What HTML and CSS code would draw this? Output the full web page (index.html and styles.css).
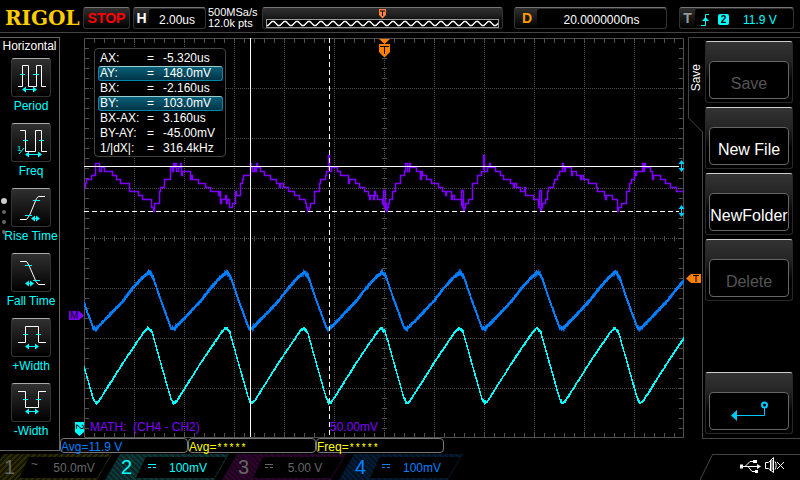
FILE: index.html
```html
<!DOCTYPE html>
<html lang="en">
<head>
<meta charset="utf-8">
<title>Oscilloscope</title>
<link rel="stylesheet" href="styles.css">
</head>
<body>
<header class="topbar">
  <div class="logo">RIGOL</div>
  <button class="chip run">STOP</button>
  <div class="chip timebase"><b class="tag">H</b><span class="well">2.00us</span></div>
  <div class="sampling">500MSa/s<br>12.0k pts</div>
  <div class="chip memory">
    <svg class="memory-mark" viewBox="0 0 8 10" width="8" height="10"><path d="M0 0H7V6L3.500 9.500L0 6Z" fill="#ff8040"/><path d="M1 2H6M3.500 2V7" stroke="#000" fill="none"/></svg>
    <svg class="memory-wave" width="100%" height="9">
      <defs><pattern id="sine" width="12" height="7" patternUnits="userSpaceOnUse"><path d="M0 5.500H1L5 1.500H7L11 5.500H12" fill="none" stroke="#fff" stroke-width="1.300"/></pattern></defs>
      <rect width="100%" height="7" fill="url(#sine)"/>
    </svg>
  </div>
  <div class="chip delay"><b class="tag orange">D</b><span class="well">20.0000000ns</span></div>
  <div class="chip trigger"><b class="tag grey">T</b>
    <span class="well"><svg viewBox="0 0 9 12" width="9" height="12"><path d="M0 11.500H4.500V.5H8" fill="none" stroke="#0ff"/><path d="M4.500 3L8 7H1Z" fill="#0ff"/></svg>
    <b class="source">2</b><span class="level">11.9 V</span></span></div>
</header>

<main class="main">
  <nav class="measure-menu">
    <h1 class="menu-title">Horizontal</h1>
    <div class="pager"><i class="dot on"></i><i class="dot"></i><i class="dot"></i><i class="dot"></i></div>
    <button class="measure"><svg class="icon" viewBox="1 1 38 37"><path class="w" d="M7 28.500H11.500V7.500H17.500V28.500H25.500V7.500H30.500V28.500H35"/><path class="c" d="M9 16.500H14M22 16.500H28M12 31.500H25"/><path class="a" d="M11 31.500L15 28.500V34.500ZM26 31.500L22 28.500V34.500Z"/></svg>Period</button>
    <button class="measure"><svg class="icon" viewBox="1 1 38 37"><path class="w" d="M9 7.500H14.500V28.500H24.500V7.500H30.500V28.500H36"/><path class="c" d="M12 17.500H17M28 17.500H33M15 31.500H30M8 31L13 25"/><path class="a" d="M14 31.500L18 28.500V34.500ZM31 31.500L27 28.500V34.500Z"/><text class="tiny" x="6" y="28">1</text></svg>Freq</button>
    <button class="measure"><svg class="icon" viewBox="1 1 38 37"><path class="w" d="M9 31.500H15.500L18.500 27.500L25.500 10.500L27.500 8.500H34"/><path class="c" d="M22 12.500H29M14 27.500H21M21 30.500H28"/><path class="a" d="M20 30.500L24 27.500V33.500ZM29 30.500L25 27.500V33.500Z"/></svg>Rise Time</button>
    <button class="measure"><svg class="icon" viewBox="1 1 38 37"><path class="w" d="M9 8.500H15.500L18 12.500L25 28.500L27.500 31.500H34"/><path class="c" d="M14 12.500H21M22 27.500H29M15 30.500H22"/><path class="a" d="M14 30.500L18 27.500V33.500ZM23 30.500L19 27.500V33.500Z"/></svg>Fall Time</button>
    <button class="measure"><svg class="icon" viewBox="1 1 38 37"><path class="w" d="M7 24.500H14.500V8.500H27.500V24.500H35"/><path class="c" d="M12 16.500H17M25 16.500H30M15 28.500H27"/><path class="a" d="M14 28.500L18 25.500V31.500ZM28 28.500L24 25.500V31.500Z"/></svg>+Width</button>
    <button class="measure"><svg class="icon" viewBox="1 1 38 37"><path class="w" d="M7 8.500H14.500V24.500H27.500V8.500H35"/><path class="c" d="M12 16.500H17M25 16.500H30M15 28.500H27"/><path class="a" d="M14 28.500L18 25.500V31.500ZM28 28.500L24 25.500V31.500Z"/></svg>-Width</button>
  </nav>

  <section class="center">
    <div class="scope">
      <svg class="plot" id="plot" viewBox="84 38 600 400">
        <g id="grid" class="grid"></g>
        <path id="math" class="trace" stroke="#8000ff"/>
        <path id="ch4-soft" class="trace" stroke="#0050b0"/>
        <path id="ch4" class="trace" stroke="#0080ff"/>
        <path id="ch2" class="trace" stroke="#00ffff"/>
        <text class="math-text" x="90" y="431">MATH:&#160; (CH4 - CH2)</text>
        <text class="math-text" x="330" y="431">50.00mV</text>
        <g class="cursor">
          <path d="M250.500 38V437M84 166.500H679"/>
          <path d="M329.500 38V437" stroke-dasharray="5 3"/>
          <path d="M84 211.500H679" stroke-dasharray="5 3"/>
        </g>
        <g fill="#00d0ff">
          <path id="handle" d="M681.500 160L684.500 164H682V168H684.500L681.500 172L678.500 168H681V164H678.500Z"/>
          <use href="#handle" y="45"/>
        </g>
        <path d="M379 39H390L384.500 44ZM379 44H390V52L384.500 57.500L379 52Z" fill="#ff8000"/>
        <path d="M380 46.500H389M384.500 46V54" stroke="#000" fill="none" stroke-width="1"/>
        <path d="M69 311H79L84 315.500L79 320H69Z" fill="#8000ff"/>
        <text class="mark" x="70" y="319">M</text>
        <path d="M75 422H84V432L79.500 436L75 432Z" fill="#0ff"/>
        <text class="mark" transform="translate(76 424) rotate(90)">2</text>
        <path d="M686 278.500L691 274H701V283H691Z" fill="#ff8000"/>
        <path d="M693 275.500H699M696 276V282" stroke="#000" fill="none"/>
      </svg>
      <table class="readout">
        <tr><th>AX:</th><td>=</td><td>-5.320us</td></tr>
        <tr class="picked"><th>AY:</th><td>=</td><td>148.0mV</td></tr>
        <tr><th>BX:</th><td>=</td><td>-2.160us</td></tr>
        <tr class="picked"><th>BY:</th><td>=</td><td>103.0mV</td></tr>
        <tr><th>BX-AX:</th><td>=</td><td>3.160us</td></tr>
        <tr><th>BY-AY:</th><td>=</td><td>-45.00mV</td></tr>
        <tr><th>1/|dX|:</th><td>=</td><td>316.4kHz</td></tr>
      </table>
    </div>
    <div class="results">
      <div class="result blue">Avg=11.9 V</div>
      <div class="result">Avg=<span class="stars">*****</span></div>
      <div class="result">Freq=<span class="stars">*****</span></div>
    </div>
  </section>

  <aside class="side">
    <div class="side-tab">
      <svg class="tab-line" viewBox="0 0 15 95" width="15" height="95"><path d="M15 .5H.5V81L14.500 95" fill="none" stroke="#444"/></svg>
      <span class="tab-text">Save</span>
      <div class="tab-rule"></div>
    </div>
    <div class="keys">
      <button class="key" disabled><span class="face">Save</span></button>
      <button class="key"><span class="face">New File</span></button>
      <button class="key"><span class="face">NewFolder</span></button>
      <button class="key" disabled><span class="face">Delete</span></button>
      <button class="key back" aria-label="Back"><span class="face"><svg viewBox="0 0 40 20" width="40" height="20"><path d="M5 14.500H35.500V7" fill="none" stroke="#00c8ff"/><path d="M2 14.500L8 9V20Z" fill="#00c8ff"/><circle cx="35.500" cy="4" r="2.500" fill="none" stroke="#00c8ff" stroke-width="2"/></svg></span></button>
    </div>
  </aside>
</main>

<footer class="channels">
  <div class="channel ch1"><b class="num">1</b><div class="vals"><span class="ac">~</span><span class="scale">50.0mV</span></div></div>
  <div class="channel ch2"><b class="num">2</b><div class="vals"><span class="dc"></span><span class="scale">100mV</span></div></div>
  <div class="channel ch3"><b class="num">3</b><div class="vals"><span class="dc"></span><span class="scale">5.00 V</span></div></div>
  <div class="channel ch4"><b class="num">4</b><div class="vals"><span class="dc"></span><span class="scale">100mV</span></div></div>
  <svg class="status" viewBox="0 0 100 26" width="100" height="26">
    <path d="M0 26L12.500 .5H100" fill="none" stroke="#444"/>
    <g fill="none" stroke="#fff"><path d="M41 12.500H58M45 12.500L50 7.500H54M48 12.500L52 17.500H56"/></g>
    <path d="M40 10.500H43V14.500H40ZM57 10L61 12.500L57 15ZM53 6H57V9H53ZM55 16H58V19H55Z" fill="#fff"/>
    <path d="M65.500 8.500H68.500L73.500 3.500V18.500L68.500 14.500H65.500ZM70.500 6V17M72 6V16M75 7.500C76.500 10 76.500 13 75 15.500M77 8L84 15M84 8L77 15" fill="none" stroke="#fff"/>
  </svg>
</footer>
<script src="traces.js"></script>
</body>
</html>
```
FILE: traces.js
```js
// Graticule and sampled traces, in plot coordinates.
const L = 84, R = 684, T = 38, B = 438, PERIOD = 77.75, START = 96;

let seed = 11;
function rnd() {
  seed = (seed * 1103515245 + 12345) % 2147483648;
  return seed / 2147483648;
}

function line(d, dash, width) {
  const p = document.createElementNS('http://www.w3.org/2000/svg', 'path');
  p.setAttribute('d', d);
  if (dash) p.setAttribute('stroke-dasharray', dash);
  if (width) p.setAttribute('stroke-width', width);
  document.getElementById('grid').appendChild(p);
}
for (let x = L + 50; x < R; x += 50) line(`M${x + .5} ${T}V${B}`, '1 1');
for (let y = T + 50; y < B; y += 50) line(`M${L} ${y + .5}H${R}`, '1 1');
line(`M${L + .5} ${T + .5}H${R - .5}V${B - .5}H${L + .5}Z`);
line(`M${L + 10} 238.5H${R}`, '1 9', 5);
line(`M384.5 ${T + 10}V${B}`, '1 9', 5);
line(`M${L + 10} ${T + 2.5}H${R}`, '1 9', 5);
line(`M${L + 10} ${B - 2.5}H${R}`, '1 9', 5);
line(`M${L + 2.5} ${T + 10}V${B}`, '1 9', 5);
line(`M${R - 2.5} ${T + 10}V${B}`, '1 9', 5);

function phase(x) {
  return (((x - START) % PERIOD) + PERIOD) % PERIOD;
}

function level(points, x) {
  const t = phase(x);
  for (let i = 1; i < points.length; i++) {
    if (t <= points[i][0]) {
      const [a, ya] = points[i - 1], [b, yb] = points[i];
      return ya + (yb - ya) * (t - a) / (b - a);
    }
  }
  return points[points.length - 1][1];
}

const wave4 = [[0, 329], [8, 321], [27, 301], [37, 288], [46, 278], [53, 272], [57, 277], [64, 298], [75, 328], [PERIOD, 329]];
const wave2 = [[0, 403], [3, 401], [27, 363], [37, 348], [48, 332], [52, 328], [56, 332], [65, 364], [75, 399], [PERIOD, 403]];
const waveM = [[0, 165], [8, 170], [14, 175], [24, 181], [34, 189], [44, 196], [52, 200], [56, 208], [60, 200], [66, 183], [72, 175], [76, 167], [PERIOD, 163]];

function band(points, half, noise) {
  let d = '';
  for (let x = L; x < R; x++) {
    const a = level(points, x), b = level(points, x + 1), t = phase(x);
    const turn = t < 2 || t > 75 || (t > 50 && t < 57);
    const n = turn ? noise * 2 : noise;
    const top = Math.round(Math.min(a, b) - half - rnd() * n);
    const bottom = Math.round(Math.max(a, b) + half + rnd() * n);
    d += `M${x + .5} ${top}V${Math.max(bottom, top + 2)}`;
  }
  return d;
}

function steps(points) {
  let d = '', x = L;
  while (x < R - 1) {
    const t = phase(x);
    const sharp = t < 3 || t > 75 || (t > 52 && t < 58);
    const r = rnd();
    const jitter = r < (sharp ? .6 : .3) ? (rnd() < .5 ? -4 : 4) : 0;
    const y = 163.5 + Math.round((level(points, x) - 163) / 4) * 4 + jitter;
    d += (d ? 'V' : `M${x + .5} `) + y;
    x = Math.min(R - 1, x + (sharp || jitter ? 1 : 1 + Math.floor(rnd() * 5)));
    d += `H${x + .5}`;
  }
  for (const sx of [329, 484]) d += `M${sx - .5} 170V155.500H${sx + .5}V170`;
  for (const sx of [384, 462, 540]) d += `M${sx - .5} 206V190.500H${sx + 1.5}V210`;
  return d;
}

document.getElementById('ch4-soft').setAttribute('d', band(wave4, 1, 1.4));
document.getElementById('ch4').setAttribute('d', band(wave4, 1, .6));
document.getElementById('ch2').setAttribute('d', band(wave2, .6, .7));
document.getElementById('math').setAttribute('d', steps(waveM));
```
FILE: styles.css
```css
* { box-sizing: border-box; }
body {
  margin: 0;
  min-height: 100vh;
  display: flex;
  flex-direction: column;
  background: #000;
  color: #fff;
  font: 12px/16px "Liberation Sans", sans-serif;
}
button { margin: 0; padding: 0; color: inherit; font: inherit; border: 0; background: none; }

.topbar {
  display: flex;
  align-items: flex-start;
  height: 33px;
  padding: 7px 6px 0 5px;
  border-bottom: 1px solid #444;
}
.logo { width: 78px; color: #fc0; font: bold 20px/22px "DejaVu Serif", serif; }
.chip {
  display: flex;
  align-items: center;
  height: 22px;
  border: 1px solid #333;
  border-top-color: #777;
  border-radius: 3px;
  background: linear-gradient(#303030, #000);
}
.run { width: 47px; margin-right: 3px; justify-content: center; color: #f00; font: bold 14px/20px "Liberation Sans", sans-serif; }
.timebase { width: 73px; margin-right: 2px; }
.tag { width: 15px; text-align: center; font-size: 14px; }
.well {
  flex: 1;
  height: 18px;
  display: flex;
  align-items: center;
  justify-content: center;
  padding-top: 3px;
  border-radius: 3px;
  background: #000;
}
.sampling { width: 54px; font-size: 11px; line-height: 11px; white-space: nowrap; }
.memory { flex: 1; flex-direction: column; padding: 1px 3px; margin-right: 11px; }
.memory-mark { display: block; flex: none; }
.memory-wave { flex: none; border: 1px solid #999; background: #000; }
.delay { width: 153px; margin-right: 12px; }
.delay .tag { width: 22px; padding-left: 2px; }
.orange { color: #ff9a00; }
.trigger { width: 115px; }
.grey { color: #999; }
.trigger .well { color: #0ff; justify-content: flex-start; padding-left: 6px; }
.source { width: 11px; margin-left: 8px; border-radius: 2px; background: #0ff; color: #000; font-size: 10px; line-height: 11px; text-align: center; }
.level { margin-left: 14px; }

.main { flex: 1; display: flex; padding-top: 4px; align-items: flex-start; }

.measure-menu {
  position: relative;
  width: 60px;
  height: 414px;
  display: flex;
  flex-direction: column;
  align-items: center;
  gap: 10px;
  border: solid #666;
  border-width: 1px 1px 1px 0;
}
.menu-title { margin: 0 0 -6px; font-size: 12px; font-weight: normal; line-height: 16px; }
.measure { width: 60px; height: 55px; padding-left: 3px; color: #0ff; line-height: 18px; text-align: center; white-space: nowrap; }
.measure { display: flex; flex-direction: column; align-items: center; }
.icon {
  display: block;
  flex: none;
  width: 40px;
  height: 39px;
  border: 1px solid #333;
  border-top-color: #aaa;
  border-radius: 3px;
  background: linear-gradient(#303030, #000);
}
.icon .w { fill: none; stroke: #fff; }
.icon .c { fill: none; stroke: #0ff; }
.icon .a { fill: #0ff; }
.tiny { fill: #0ff; font-size: 8px; }
.pager { position: absolute; left: 1px; top: 160px; display: flex; flex-direction: column; align-items: center; gap: 6px; }
.dot { width: 4px; height: 4px; border-radius: 50%; background: #666; }
.dot.on { width: 6px; height: 6px; background: #ccc; }

.center { flex: 1; min-width: 0; }
.scope { position: relative; padding: 1px 4px 0 24px; }
.plot { display: block; width: 100%; overflow: visible; }
.grid path { fill: none; stroke: #505050; }
.trace { fill: none; shape-rendering: crispEdges; }
#math { stroke-width: 1.5px; shape-rendering: auto; }
.math-text { fill: #8000ff; font-size: 12px; }
.mark { fill: #000; font-size: 10px; }
.cursor path { fill: none; stroke: #fff; }

.readout {
  position: absolute;
  left: 34px;
  top: 11px;
  display: block;
  width: 132px;
  padding: 2px 2px 0 3px;
  border: 1px solid #444;
  border-radius: 4px;
  background: #000;
}
.readout tbody { display: block; }
.readout tr { display: grid; grid-template-columns: 47px 16px 1fr; height: 15px; border: 1px solid transparent; line-height: 15px; padding-left: 1px; }
.readout th, .readout td { padding: 0; font-weight: normal; text-align: left; line-height: 15px; margin-top: -1px; white-space: nowrap; }
.readout .picked { border-color: #0088a8; border-radius: 3px; background: linear-gradient(#0a6078, #003448); border-top-color: #9cc; }

.results { display: flex; }
.result { width: 128px; height: 15px; border: 1px solid #777; border-radius: 4px; color: #ff0; line-height: 16px; white-space: nowrap; }
.result.blue { color: #0080ff; }
.stars { font: 10px/10px "Liberation Mono", monospace; }

.side { display: flex; width: 112px; height: 402px; }
.side-tab { position: relative; width: 15px; display: flex; flex-direction: column; }
.tab-line { display: block; flex: none; }
.tab-text { position: absolute; left: 0; top: 27px; writing-mode: vertical-rl; transform: rotate(180deg); }
.tab-rule { flex: 1; border-right: 1px solid #444; }
.keys {
  flex: 1;
  display: flex;
  flex-direction: column;
  gap: 4px;
  padding: 3px 7px 4px 2px;
  border: solid #444;
  border-width: 1px 0;
}
.key {
  height: 62px;
  padding: 19px 3px 4px;
  border: 1px solid #282828;
  border-top-color: #ccc;
  border-radius: 3px;
  background: linear-gradient(#333, #262626 18px, #000 40px);
  font-size: 16px;
}
.face {
  display: flex;
  align-items: center;
  justify-content: center;
  height: 38px;
  padding-top: 8px;
  border: 1px solid #666;
  border-radius: 4px;
  background: #000;
  overflow: hidden;
}
.key:disabled { color: #555; }
.back { margin-top: auto; }
.back .face { padding-top: 0; }

.channels { display: flex; height: 26px; overflow: hidden; }
.channel {
  display: flex;
  width: 124px;
  margin-right: -7px;
  padding: 3px 3px 2px 15px;
  clip-path: polygon(15px 0, 100% 0, calc(100% - 15px) 100%, 0 100%);
}
.channel .num { width: 16px; padding-left: 1px; font-size: 20px; font-weight: normal; line-height: 21px; }
.vals {
  flex: 1;
  display: flex;
  align-items: center;
  padding-left: 12px;
  background: #000;
  clip-path: polygon(10px 0, 100% 0, calc(100% - 12px) 100%, 0 100%);
}
.scale { width: 64px; text-align: center; }
.ac { width: 8px; line-height: 8px; margin-top: -8px; }
.dc { width: 8px; height: 4px; margin-bottom: 3px; border-top: 1px solid currentColor; border-bottom: 1px dashed currentColor; }
.ch1 { margin-left: -12px; color: #666; background: repeating-linear-gradient(-45deg, #2c2c00 0 2px, #141400 2px 4px); }
.ch2 { color: #0ff; background: repeating-linear-gradient(45deg, #003c3c 0 2px, #142020 2px 4px); }
.ch3 { color: #666; background: repeating-linear-gradient(45deg, #300030 0 2px, #180818 2px 4px); }
.ch4 { color: #0080ff; background: repeating-linear-gradient(45deg, #001c3c 0 2px, #081018 2px 4px); }
.ch1 .scale { padding-left: 6px; }
.status { display: block; margin-left: auto; }
```
